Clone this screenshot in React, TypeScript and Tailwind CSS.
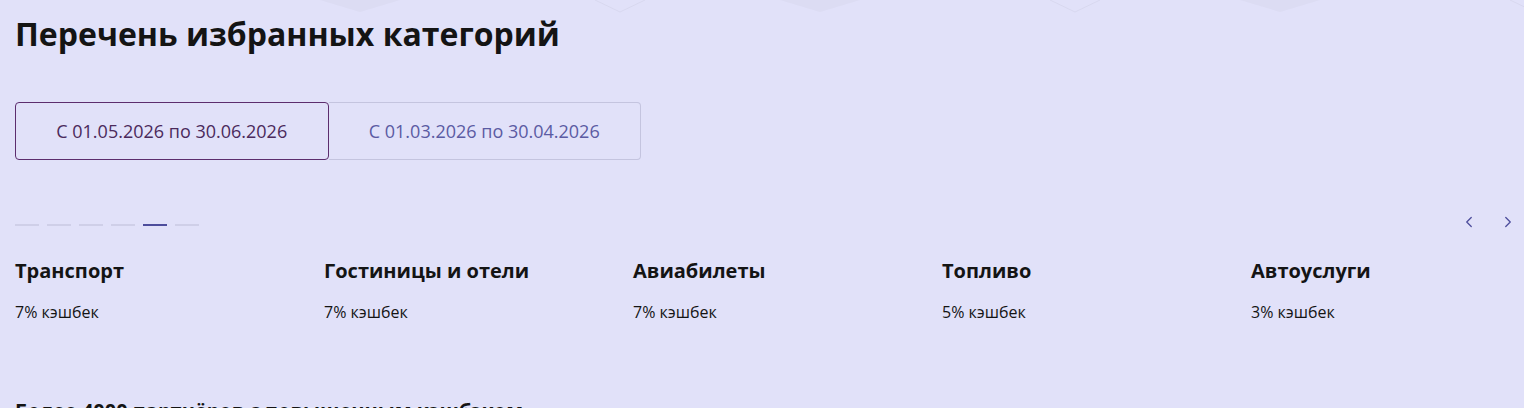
import { ChevronLeft, ChevronRight } from 'lucide-react';

const PERIODS = ['С 01.05.2026 по 30.06.2026', 'С 01.03.2026 по 30.04.2026'];

const CATEGORIES = [
  { name: 'Транспорт', cashback: '7% кэшбек' },
  { name: 'Гостиницы и отели', cashback: '7% кэшбек' },
  { name: 'Авиабилеты', cashback: '7% кэшбек' },
  { name: 'Топливо', cashback: '5% кэшбек' },
  { name: 'Автоуслуги', cashback: '3% кэшбек' },
];

export default function App() {
  return (
    <div
      className="relative w-[1524px] h-[408px] overflow-hidden bg-[#e1e1f9] text-[#141414]"
      style={{ fontFamily: '"Open Sans", "Noto Sans", sans-serif' }}
    >
      {/* faint decorative pattern at the top */}
      <svg className="absolute left-0 top-0" width="1524" height="14" aria-hidden>
        {[320, 780, 1240].map((x) => (
          <path key={x} d={`M${x} 0 L${x + 40} 12 L${x + 80} 0`} fill="#dcdcf3" />
        ))}
        {[620, 1075, 1535].map((x) => (
          <path key={x} d={`M${x - 25} 0 L${x} 12 L${x + 25} 0`} fill="none" stroke="#d8d8ef" />
        ))}
      </svg>

      <div className="relative px-[15px] pt-[12px]">
        <h1 className="text-[32px] leading-[44px] font-bold">Перечень избранных категорий</h1>

        {/* Periods */}
        <div className="mt-[46px] flex w-[626px] h-[58px]">
          {PERIODS.map((p, i) => {
            const active = i === 0;
            return (
              <button
                key={p}
                className={
                  active
                    ? 'flex-1 flex items-center justify-center rounded-[4px] border border-[#5c2d6e] text-[18px] text-[#4b2a5c]'
                    : 'flex-1 flex items-center justify-center rounded-r-[4px] border border-l-0 border-[#c4c4df] text-[18px] text-[#5b5ba3]'
                }
              >
                {p}
              </button>
            );
          })}
        </div>

        {/* Pager */}
        <div className="mt-[54px] flex items-center justify-between h-[22px]">
          <div className="flex gap-2">
            {[0, 1, 2, 3, 4, 5].map((i) => (
              <span
                key={i}
                className={i === 4 ? 'block w-6 h-[2px] bg-[#4d4d9c]' : 'block w-6 h-[2px] bg-[#cfcfe8]'}
              />
            ))}
          </div>
          <div className="flex items-center gap-[21px] mr-[-8px] mt-[-7px] text-[#4d4d9c]">
            <ChevronLeft size={18} strokeWidth={1.75} />
            <ChevronRight size={18} strokeWidth={1.75} />
          </div>
        </div>

        {/* Categories */}
        <div className="mt-[21px] flex gap-4">
          {CATEGORIES.map((c) => (
            <div key={c.name} className="w-[293px] shrink-0">
              <div className="text-[20px] leading-[28px] font-bold">{c.name}</div>
              <div className="mt-[16px] text-[16px] leading-[22px]">{c.cashback}</div>
            </div>
          ))}
        </div>

        <div className="mt-[74px] text-[20px] leading-[28px] font-bold">
          Более 4000 партнёров с повышенным кэшбэком
        </div>
      </div>
    </div>
  );
}
